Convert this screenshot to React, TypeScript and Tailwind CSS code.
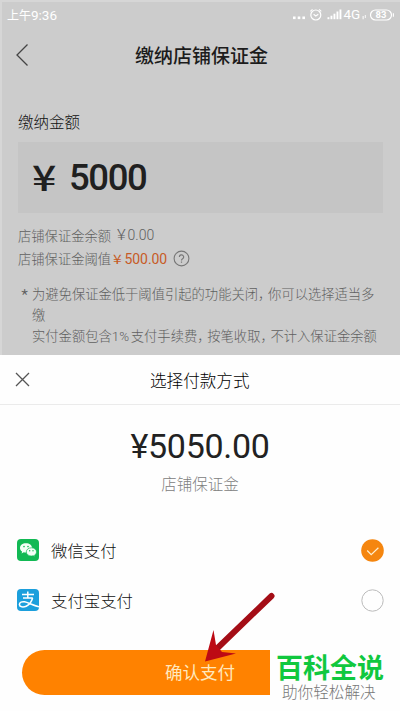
import type { ReactNode } from "react";

function Comma() {
  return <span className="tracking-[-3.3px]">，</span>;
}

function StatusBar() {
  return (
    <div className="flex h-[26px] items-center justify-between pl-[5px] pr-[5px] text-white">
      <span className="font-['Roboto','Noto_Sans_CJK_SC',sans-serif] text-[13.5px] leading-[20px] whitespace-nowrap">
        <span className="text-[12px]">上午</span>9:36
      </span>
      <svg width="102" height="16" viewBox="0 0 102 16" fill="none" stroke="white">
        <g fill="white" stroke="none">
          <rect x="0" y="9.5" width="2.6" height="2.6" />
          <rect x="4.7" y="9.5" width="2.6" height="2.6" />
          <rect x="9.4" y="9.5" width="2.6" height="2.6" />
          <rect x="34.5" y="10.2" width="1.9" height="2" />
          <rect x="37.5" y="8.7" width="1.9" height="3.5" />
          <rect x="40.5" y="6.7" width="1.9" height="5.5" />
          <rect x="43.5" y="4.5" width="1.9" height="7.7" />
          <rect x="46.5" y="2.5" width="1.9" height="9.7" />
          <text x="50.5" y="12.2" fontSize="13.5" fontFamily="Roboto, sans-serif">4G</text>
          <path d="M69.5 9h1.3v3.2h-1.3zM71.8 8h1.1v3h-1.1z" opacity=".8" />
        </g>
        <circle cx="22.8" cy="8" r="5" strokeWidth="1.2" />
        <path d="M20.6 7.2l2.2 1.8 2.5-1.8M17.3 4.3l2.2-1.9M28.3 4.3l-2.2-1.9" strokeWidth="1.1" />
        <rect x="77.5" y="3" width="21" height="10" rx="5" strokeWidth="1.2" />
        <path d="M100.4 6.2v3.6" strokeWidth="1.1" />
        <text x="82.6" y="11.3" fontSize="9.5" fontWeight="700" fill="white" stroke="none" fontFamily="Roboto, sans-serif">83</text>
      </svg>
    </div>
  );
}

function DepositPage() {
  return (
    <div className="h-[355px] overflow-hidden border-l-2 border-t-2 border-[#d6d6d6] bg-[#cccccc]">
      <StatusBar />
      <header className="flex h-[54px] items-center pl-[13px]">
        <svg width="14" height="24" viewBox="0 0 14 24" fill="none" stroke="#444" strokeWidth="1.3">
          <path d="M12.5 1.5L2 12l10.5 10.5" />
        </svg>
        <h1 className="ml-[106px] text-[19px] font-medium leading-[28px] text-[#1c1c1c]">缴纳店铺保证金</h1>
      </header>
      <main className="pl-4">
        <div className="mt-[27px] h-[33px] text-[15.5px] font-light leading-[24px] text-[#111]">缴纳金额</div>
        <div className="flex h-[71px] w-[365px] items-center bg-[#c5c5c5] pl-[14px] font-medium text-[#202020]">
          <span className="w-[37px] text-[35px] leading-[50px]"><span className="inline-block origin-left -translate-y-[2px] scale-x-[1.22]">¥</span></span>
          <span className="font-['Roboto',sans-serif] text-[36.5px] leading-[50px] tracking-[-1.4px]">5000</span>
        </div>
        <div className="mt-[11px] text-[13.3px] font-light leading-[23px] text-[#606060]">
          <div className="flex">
            店铺保证金余额<span className="ml-[6px] font-['Roboto',sans-serif] text-[14px] tracking-[0.1px]"><span className="mr-[3px] inline-block origin-left scale-x-[1.2]">¥</span>0.00</span>
          </div>
          <div className="flex items-center">
            店铺保证金阈值
            <span className="ml-[2px] flex font-['Roboto',sans-serif] text-[14px] font-normal tracking-[-0.1px] text-[#c75b26]"><span className="w-[11.5px] origin-left scale-x-[1.2] font-['Noto_Sans_CJK_SC',sans-serif] text-[13px]">¥</span><span className="translate-y-[0.5px]">500.00</span></span>
            <svg className="ml-[6px]" width="17" height="17" viewBox="0 0 17 17" fill="none" stroke="#777">
              <circle cx="8.5" cy="8.5" r="7.4" strokeWidth="1.1" />
              <path d="M6.4 7a2.1 2.1 0 1 1 3.2 1.7c-.8.5-1.1.8-1.1 1.7M8.5 11.5v1.2" strokeWidth="1.2" />
            </svg>
          </div>
        </div>
        <div className="mt-[13px] flex whitespace-nowrap text-[13.3px] font-light leading-[21px] text-[#606060]">
          <span className="w-[14px] pl-[2px] pt-[4px] text-[21px]">*</span>
          <div>
            <div>为避免保证金低于阈值引起的功能关闭<Comma />你可以选择适当多</div>
            <div>缴</div>
            <div>实付金额包含<span className="inline-block w-[19px] font-['Roboto',sans-serif]">1%</span>支付手续费<Comma />按笔收取<Comma />不计入保证金余额</div>
          </div>
        </div>
      </main>
    </div>
  );
}

function WeChatIcon() {
  return (
    <svg width="22" height="22" viewBox="0 0 22 22">
      <rect width="22" height="22" rx="4" fill="#12b954" />
      <path d="M9 4.2c-3.5 0-6 2.1-6 4.7 0 1.5.8 2.8 2.1 3.7l-.5 1.8 2.1-1.1c.7.2 1.5.3 2.3.3 3.4 0 6-2.1 6-4.7S12.5 4.2 9 4.2z" fill="#f5fff7" />
      <path d="M14.4 8.8c-2.9 0-5.1 1.8-5.1 4.1s2.2 4.1 5.1 4.1c.7 0 1.3-.1 1.9-.3l1.700 1-.4-1.600c1.200-.8 1.900-1.900 1.900-3.200 0-2.300-2.200-4.100-5.100-4.100z" fill="#f5fff7" stroke="#12b954" strokeWidth=".7" />
      <g fill="#12b954">
        <circle cx="7" cy="7.6" r=".8" />
        <circle cx="11" cy="7.6" r=".8" />
        <circle cx="12.7" cy="11.7" r=".7" />
        <circle cx="16" cy="11.7" r=".7" />
      </g>
    </svg>
  );
}

function AlipayIcon() {
  return (
    <svg width="22" height="22" viewBox="0 0 22 22" fill="none">
      <rect width="22" height="22" rx="4" fill="#1c9fdc" />
      <g stroke="white" strokeWidth="1.5">
        <path d="M10.8 2.6v6M5 5.6h12M6 9h9.800" />
        <path d="M15.600 9c-1 3.600-3.500 6.900-6.400 8.200-3 1.300-6.600.9-6.800-1.600-.1-2.400 2.600-3.300 5.200-2.800 3.600.7 8.200 3.500 14.400 4.900" />
      </g>
    </svg>
  );
}

function PayRow({ icon, label, checked }: { icon: ReactNode; label: string; checked?: boolean }) {
  return (
    <div className="flex h-[50px] items-center pl-[17px] pr-4">
      {icon}
      <span className="ml-[12px] flex-1 text-[16.4px] font-light leading-[24px] text-[#111]">{label}</span>
      <svg width="23" height="23" viewBox="0 0 23 23" fill="none">
        {checked ? (
          <>
            <circle cx="11.5" cy="11.5" r="11.3" fill="#f5860f" />
            <path d="M6.200 11.500l4 4.200 7.200-7" stroke="#fff0d0" strokeWidth="1.2" />
          </>
        ) : (
          <circle cx="11.5" cy="11.5" r="10.7" stroke="#bbb" />
        )}
      </svg>
    </div>
  );
}

export default function App() {
  return (
    <div className="relative h-[711px] w-[400px] overflow-hidden bg-[#fefefe] font-['Noto_Sans_CJK_SC',sans-serif]">
      <DepositPage />
      <section>
        <div className="flex h-[50px] items-center border-b border-[#ebebeb] pl-[15px]">
          <svg width="15" height="15" viewBox="0 0 15 15" fill="none" stroke="#555" strokeWidth="1.3">
            <path d="M1 1l13 13M14 1L1 14" />
          </svg>
          <h2 className="ml-[120px] text-[16.6px] font-light leading-[24px] text-black">选择付款方式</h2>
        </div>
        <div className="flex h-[120px] flex-col items-center pt-[21px]">
          <div className="font-['Roboto',sans-serif] text-[34px] leading-[40px] tracking-[-0.3px] text-[#222]">¥5050.00</div>
          <div className="mt-[5px] text-[15.5px] font-light leading-[24px] text-[#808080]">店铺保证金</div>
        </div>
        <PayRow icon={<WeChatIcon />} label="微信支付" checked />
        <PayRow icon={<AlipayIcon />} label="支付宝支付" />
        <button className="ml-[22px] mt-[25px] flex h-[44.5px] w-[356px] items-center justify-center rounded-full bg-[#ff8200] text-[17.5px] text-[#ffe8bd]">
          确认支付
        </button>
      </section>
      <div className="absolute bottom-0 left-[270px] h-[71px] w-[130px] bg-[#fefefe] pl-[6px] pt-[11px] whitespace-nowrap">
        <div className="text-[27px] font-bold leading-[31px] text-[#10c83e]">百科全说</div>
        <div className="pl-[6px] text-[15.6px] font-light leading-[18px] text-[#777]">助你轻松解决</div>
      </div>
      <svg className="absolute left-[200px] top-[590px]" width="80" height="75" viewBox="0 0 80 75">
        <path d="M71.5 6L16 59.500" stroke="#a40d16" strokeWidth="6" strokeLinecap="round" />
        <path d="M5 71.5L13.5 40L16 55L22 62L36 63.500Z" fill="#bd0a14" />
      </svg>
    </div>
  );
}
